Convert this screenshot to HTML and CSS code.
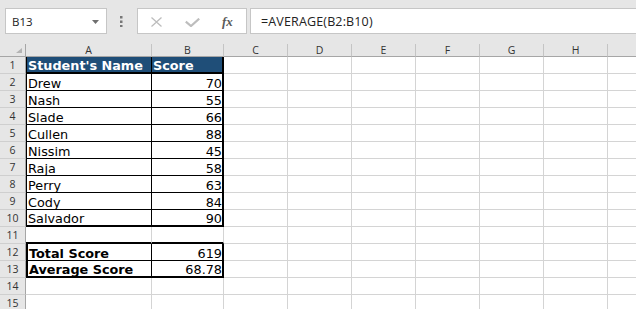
FILE: index.html
```html
<!DOCTYPE html>
<html lang="en">
<head>
    <meta charset="UTF-8">
    <meta name="viewport" content="width=device-width, initial-scale=1.0">
    <title>Student Scores</title>
    <link rel="stylesheet" href="styles.css">
</head>
<body>
    <div class="toolbar">
        <div class="namebox">
            <span>B13</span>
            <svg class="caret" width="7" height="4" viewBox="0 0 7 4"><path d="M0 0H7L3.5 4Z" fill="#6f6f6f"/></svg>
        </div>
        <div class="grip">
            <svg width="3" height="11" viewBox="0 0 3 11"><rect x="0" y="0" width="2.5" height="2.5" fill="#777"/><rect x="0" y="4.5" width="2.5" height="2.5" fill="#777"/><rect x="0" y="9" width="2.5" height="2.5" fill="#777"/></svg>
        </div>
        <div class="fxbox">
            <svg width="11" height="10" viewBox="0 0 11 10"><path d="M0.5 0.5L10.5 9.5M10.5 0.5L0.5 9.5" stroke="#bdbdbd" stroke-width="1.3" fill="none"/></svg>
            <svg width="15" height="9" viewBox="0 0 15 9"><path d="M0.8 3.6L6 8L14.2 0.7" stroke="#bdbdbd" stroke-width="2.2" fill="none"/></svg>
            <span class="fx">fx</span>
        </div>
        <div class="formula">=AVERAGE(B2:B10)</div>
    </div>

    <div class="sheet">
        <div class="row cols">
            <div class="corner"><svg width="6" height="5" viewBox="0 0 6 5"><path d="M6 0V5H0Z" fill="#b4b4b4"/></svg></div>
            <div>A</div><div>B</div><div>C</div><div>D</div><div>E</div><div>F</div><div>G</div><div>H</div><div></div>
        </div>
        <div class="row head">
            <div class="rh">1</div>
            <div class="a t">Student's Name</div><div class="b t">Score</div>
            <div></div><div></div><div></div><div></div><div></div><div></div><div></div>
        </div>
        <div class="row">
            <div class="rh">2</div>
            <div class="a t">Drew</div><div class="b t num">70</div>
            <div></div><div></div><div></div><div></div><div></div><div></div><div></div>
        </div>
        <div class="row">
            <div class="rh">3</div>
            <div class="a t">Nash</div><div class="b t num">55</div>
            <div></div><div></div><div></div><div></div><div></div><div></div><div></div>
        </div>
        <div class="row">
            <div class="rh">4</div>
            <div class="a t">Slade</div><div class="b t num">66</div>
            <div></div><div></div><div></div><div></div><div></div><div></div><div></div>
        </div>
        <div class="row">
            <div class="rh">5</div>
            <div class="a t">Cullen</div><div class="b t num">88</div>
            <div></div><div></div><div></div><div></div><div></div><div></div><div></div>
        </div>
        <div class="row">
            <div class="rh">6</div>
            <div class="a t">Nissim</div><div class="b t num">45</div>
            <div></div><div></div><div></div><div></div><div></div><div></div><div></div>
        </div>
        <div class="row">
            <div class="rh">7</div>
            <div class="a t">Raja</div><div class="b t num">58</div>
            <div></div><div></div><div></div><div></div><div></div><div></div><div></div>
        </div>
        <div class="row">
            <div class="rh">8</div>
            <div class="a t">Perry</div><div class="b t num">63</div>
            <div></div><div></div><div></div><div></div><div></div><div></div><div></div>
        </div>
        <div class="row">
            <div class="rh">9</div>
            <div class="a t">Cody</div><div class="b t num">84</div>
            <div></div><div></div><div></div><div></div><div></div><div></div><div></div>
        </div>
        <div class="row last">
            <div class="rh">10</div>
            <div class="a t">Salvador</div><div class="b t num">90</div>
            <div></div><div></div><div></div><div></div><div></div><div></div><div></div>
        </div>
        <div class="row gap">
            <div class="rh">11</div>
            <div class="a"></div><div class="b"></div>
            <div></div><div></div><div></div><div></div><div></div><div></div><div></div>
        </div>
        <div class="row box">
            <div class="rh">12</div>
            <div class="a t">Total Score</div><div class="b t num">619</div>
            <div></div><div></div><div></div><div></div><div></div><div></div><div></div>
        </div>
        <div class="row box last">
            <div class="rh">13</div>
            <div class="a t">Average Score</div><div class="b t num">68.78</div>
            <div></div><div></div><div></div><div></div><div></div><div></div><div></div>
        </div>
        <div class="row">
            <div class="rh">14</div>
            <div></div><div></div>
            <div></div><div></div><div></div><div></div><div></div><div></div><div></div>
        </div>
        <div class="row">
            <div class="rh">15</div>
            <div></div><div></div>
            <div></div><div></div><div></div><div></div><div></div><div></div><div></div>
        </div>
    </div>
</body>
</html>
```

FILE: styles.css
```css
body {
    margin: 0;
    padding: 0;
    overflow: hidden;
    background-color: #fff;
    font-family: "DejaVu Sans", Verdana, sans-serif;
}

/* formula bar */

.toolbar {
    display: flex;
    height: 44px;
    box-sizing: border-box;
    padding: 8px 0 10px 5px;
    background-color: #e6e6e6;
    font-family: "Open Sans", sans-serif;
}

.namebox {
    width: 102px;
    box-sizing: border-box;
    display: flex;
    align-items: center;
    justify-content: space-between;
    padding: 0 7px 0 6px;
    background-color: #fff;
    border: 1px solid #c6c6c6;
    font-size: 11.5px;
    color: #222;
}

.caret {
    margin-top: 1px;
}

.grip {
    width: 30px;
    display: flex;
    align-items: center;
    padding-left: 13px;
    box-sizing: border-box;
}

.fxbox {
    width: 110px;
    box-sizing: border-box;
    display: flex;
    align-items: center;
    gap: 23px;
    padding-left: 13px;
    background-color: #fff;
    border: 1px solid #c6c6c6;
}

.fxbox svg {
    margin-top: 2px;
}

.fx {
    font-family: "Liberation Serif", serif;
    font-style: italic;
    font-weight: bold;
    font-size: 13px;
    color: #5a5a5a;
    margin-left: -1px;
    margin-top: 1px;
}

.formula {
    flex: 1;
    margin-left: 3px;
    display: flex;
    align-items: center;
    padding-left: 10px;
    background-color: #fff;
    border: 1px solid #c6c6c6;
    border-right: none;
    font-size: 12.5px;
    letter-spacing: 0.15px;
    color: #222;
}

/* grid */

.sheet {
    overflow: hidden;
}

.row {
    display: grid;
    grid-template-columns: 26px 126px 72px repeat(6, 64px) 28px;
    height: 17px;
}

.row > div {
    box-sizing: border-box;
    border-right: 1px solid #d4d4d4;
    border-bottom: 1px solid #d4d4d4;
    display: flex;
    align-items: flex-end;
    padding-left: 1px;
    font-size: 12.8px;
    line-height: 12px;
    white-space: nowrap;
    color: #000;
}

.row > div:last-child {
    border-right: none;
}

.row.cols {
    height: 13px;
}

.row.cols > div {
    background-color: #e6e6e6;
    border-right-color: #c4c4c4;
    border-bottom-color: #a6a6a6;
    align-items: center;
    justify-content: center;
    padding: 0;
    font-family: "Open Sans", sans-serif;
    font-size: 10.5px;
    line-height: 12px;
    color: #333;
}

.row.cols > .corner {
    align-items: flex-end;
    justify-content: flex-end;
    padding: 0 3px 3px 0;
    border-right-color: #a6a6a6;
}

.row > .rh {
    background-color: #e6e6e6;
    border-right-color: #a6a6a6;
    border-bottom-color: #cfcfcf;
    align-items: center;
    justify-content: center;
    padding: 0;
    font-family: "Open Sans", sans-serif;
    font-size: 10.5px;
    color: #333;
}

/* bordered tables */

.row > .t {
    border-right-color: #000;
    border-bottom-color: #000;
}

.row > .a.t {
    border-left: 1px solid #000;
}

.row > .b.t {
    border-right-width: 2px;
}

.row > .num {
    justify-content: flex-end;
    padding-left: 0;
}

.row.head > .t {
    background-color: #1f4e78;
    color: #fff;
    font-weight: bold;
    border-bottom-width: 2px;
}

.row.last > .t {
    border-bottom-width: 2px;
}

.row.gap > .a,
.row.gap > .b {
    border-bottom: 2px solid #000;
}

.row.box > .a {
    border-left-width: 2px;
    font-weight: bold;
}
```
